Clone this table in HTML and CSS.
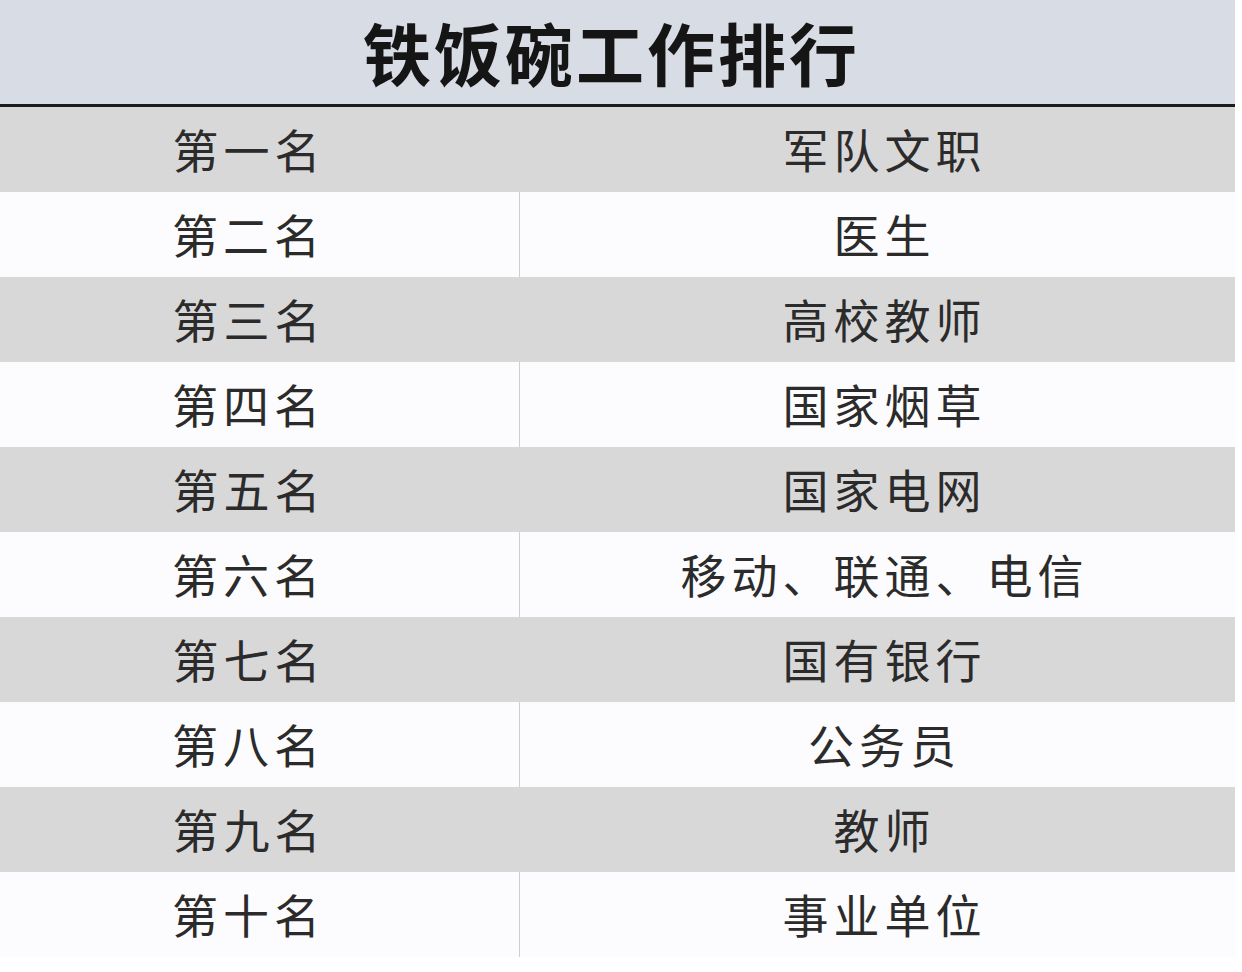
FILE: index.html
```html
<!DOCTYPE html>
<html lang="zh">
<head>
<meta charset="utf-8">
<title>铁饭碗工作排行</title>
<link rel="stylesheet" href="styles.css">
</head>
<body>
<div class="board">
  <div class="title">铁饭碗工作排行</div>
  <div class="table">
    <div class="row alt"><div class="rank">第一名</div><div class="job">军队文职</div></div>
    <div class="row"><div class="rank">第二名</div><div class="job">医生</div></div>
    <div class="row alt"><div class="rank">第三名</div><div class="job">高校教师</div></div>
    <div class="row"><div class="rank">第四名</div><div class="job">国家烟草</div></div>
    <div class="row alt"><div class="rank">第五名</div><div class="job">国家电网</div></div>
    <div class="row"><div class="rank">第六名</div><div class="job">移动、联通、电信</div></div>
    <div class="row alt"><div class="rank">第七名</div><div class="job">国有银行</div></div>
    <div class="row"><div class="rank">第八名</div><div class="job">公务员</div></div>
    <div class="row alt"><div class="rank">第九名</div><div class="job">教师</div></div>
    <div class="row"><div class="rank">第十名</div><div class="job">事业单位</div></div>
  </div>
</div>
</body>
</html>
```
FILE: styles.css
```css
html, body {
  margin: 0;
  padding: 0;
  background: #ffffff;
}
body {
  font-family: "Noto Sans CJK SC", "Noto Sans", sans-serif;
  color: #2b2b2b;
}
.board {
  width: 1235px;
}
.title {
  height: 104px;
  background: #d8dce4;
  border-bottom: 3px solid #1c1c1c;
  display: flex;
  align-items: center;
  justify-content: center;
  font-size: 68px;
  font-weight: 700;
  color: #151515;
  letter-spacing: 3px;
  padding-right: 12px;
  line-height: 1;
}
.table {
  display: flex;
  flex-direction: column;
}
.row {
  height: 85px;
  display: grid;
  grid-template-columns: 520px 1fr;
  background: #fcfbfd;
  font-size: 46px;
  font-weight: 400;
  line-height: 1;
  letter-spacing: 5px;
}
.row.alt {
  background: #d9d8d9;
}
.rank, .job {
  display: flex;
  align-items: center;
  justify-content: center;
  padding-bottom: 4px;
}
.rank {
  padding-right: 22px;
}
.job {
  padding-left: 14px;
}
.row:not(.alt) .rank {
  border-right: 1px solid #cfcfcf;
}
```
